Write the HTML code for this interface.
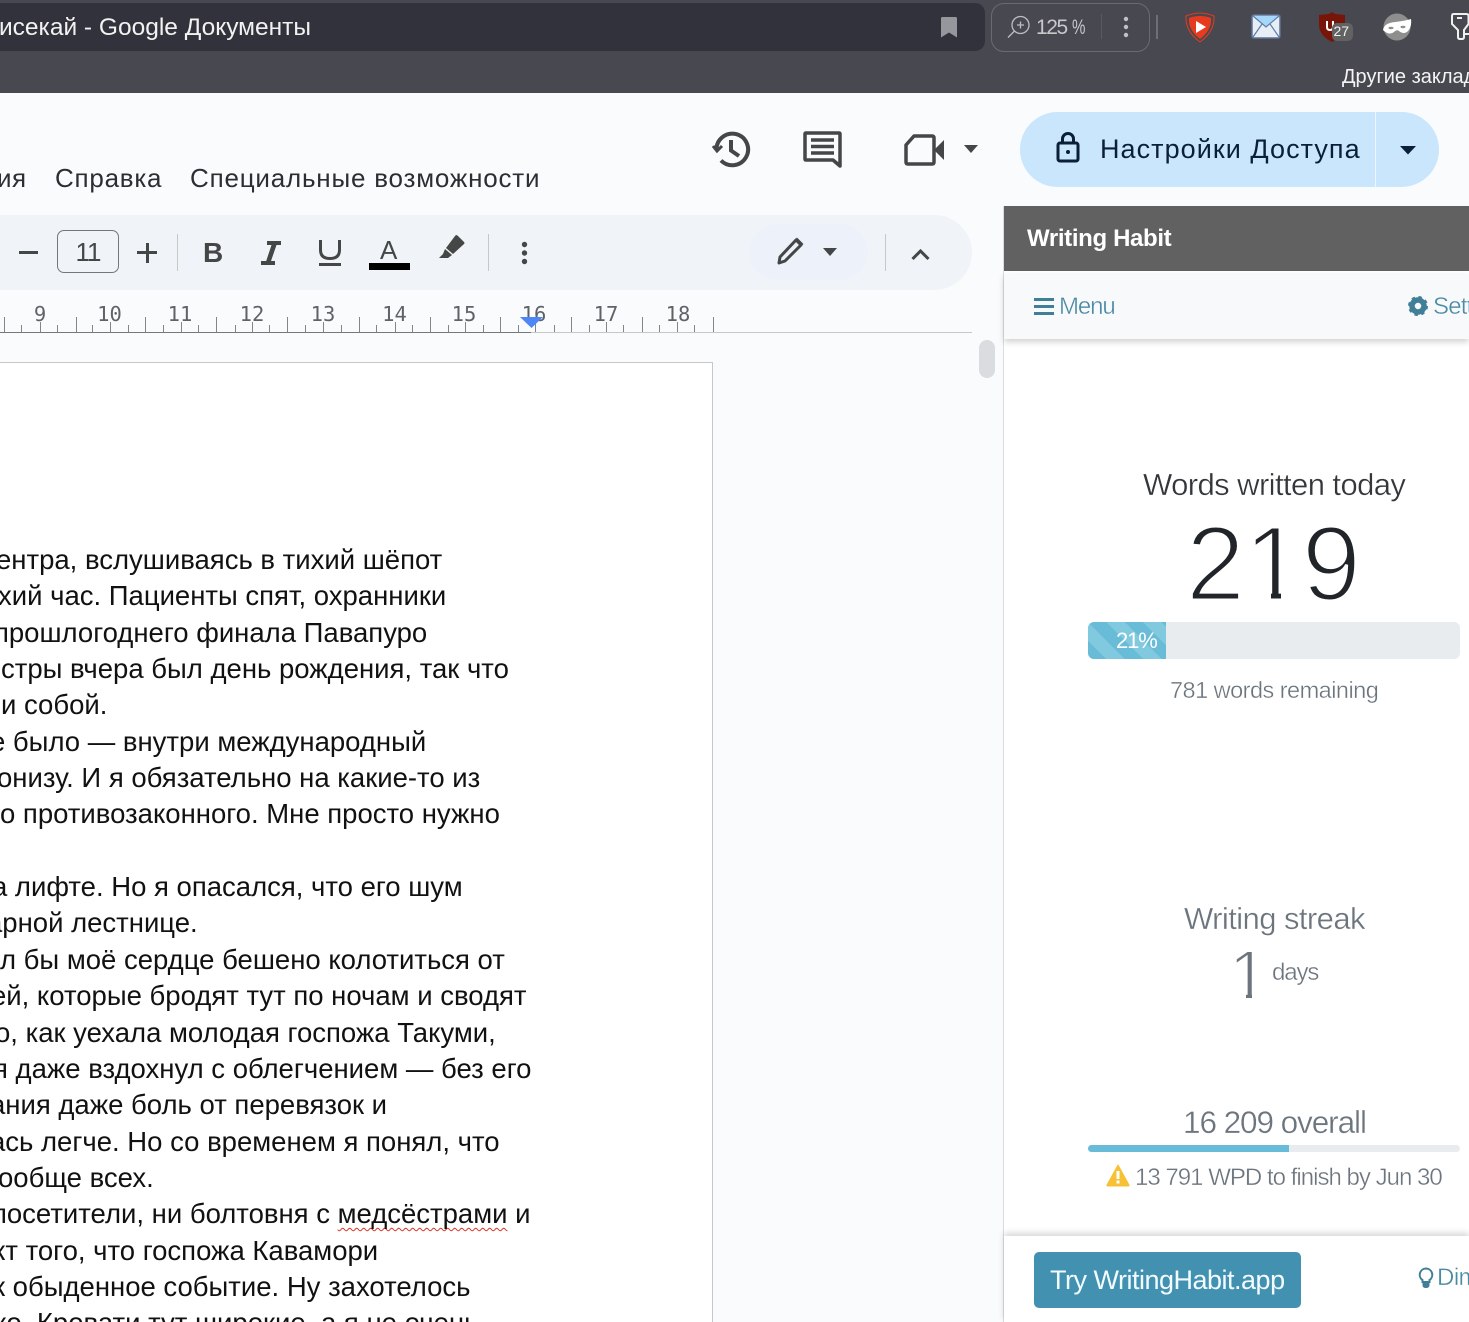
<!DOCTYPE html>
<html lang="ru"><head><meta charset="utf-8"><title>Google Документы</title>
<style>
html,body{margin:0;padding:0;width:1469px;height:1322px;overflow:hidden;background:#f9fbfd;font-family:"Liberation Sans",sans-serif}
body{position:relative}
#w{position:absolute;left:0;top:0;width:1469px;height:1322px;overflow:hidden}
.a{position:absolute;white-space:nowrap}
.l{position:absolute;white-space:nowrap;font-size:27.500px;line-height:36px;color:#111}
.lt{-webkit-text-stroke:.35px #fff}
svg{position:absolute;overflow:visible}
</style></head><body><div id="w">
<div class="a" style="left:0;top:0;width:1469px;height:93px;background:#484850"></div>
<div class="a" style="left:0;top:3px;width:985px;height:48px;background:#31323b;border-radius:0 10px 10px 0"></div>
<div class="a" style="left:-1px;top:13px;font-size:24.500px;line-height:30px;color:#f2f2f2">исекай - Google Документы</div>
<svg style="left:941px;top:17px" width="16" height="21"><path d="M0 1.500Q0 0 1.500 0H14.500Q16 0 16 1.500V20.500L8 15.500L0 20.500Z" fill="#96979c"/></svg>
<div class="a" style="left:991px;top:3px;width:157px;height:47px;border:1px solid #6a6b72;border-radius:13px"></div>
<svg style="left:1007px;top:14px" width="26" height="26" fill="none" stroke="#bdbdc1" stroke-width="1.300"><circle cx="13.500" cy="11" r="8.500"/><path d="M7.500 17L1 23.500M13.500 7.500V14.500M10 11H17"/></svg>
<div class="a" style="left:1036px;top:14px;font-size:21px;line-height:28px;color:#c8c8cb;letter-spacing:-1.400px">125</div>
<div class="a" style="left:1072px;top:14px;font-size:21px;line-height:28px;color:#c8c8cb;transform:scaleX(.72);transform-origin:0 0">%</div>
<div class="a" style="left:1101px;top:14px;width:1px;height:25px;background:#5a5b62"></div>
<svg style="left:1122px;top:16px" width="8" height="22" fill="#c2c2c5"><circle cx="4" cy="3" r="2.200"/><circle cx="4" cy="11" r="2.200"/><circle cx="4" cy="19" r="2.200"/></svg>
<div class="a" style="left:1156px;top:15px;width:2px;height:24px;background:#6e6f76"></div>
<svg style="left:1184px;top:11px" width="32" height="32"><path d="M16 2Q22 2 30 5Q31 20 16 31Q1 20 2 5Q10 2 16 2Z" fill="none" stroke="#e63b1f" stroke-width="1"/><path d="M16 5Q22 5 27 7Q28 19 16 28Q4 19 5 7Q10 5 16 5Z" fill="#e63b1f"/><path d="M12 10L22 16L12 22Z" fill="#fff"/></svg>
<svg style="left:1251px;top:14px" width="30" height="25"><rect x="1" y="1" width="28" height="23" rx="2" fill="#e8eef6" stroke="#5d7396" stroke-width="1.500"/><path d="M2 2H28L15 13Z" fill="#a6d8fb"/><path d="M2 2L15 13L28 2M2 23L11 10M28 23L19 10" fill="none" stroke="#5d7fa8" stroke-width="1.200"/></svg>
<svg style="left:1318px;top:12px" width="36" height="31"><path d="M14 0L17 2L27 3V14Q26 24 14 30Q2 24 1 14V3L11 2Z" fill="#761508"/><path d="M9 9V15Q9 18 12 18Q15 18 15 15V9" fill="none" stroke="#fff" stroke-width="2"/><rect x="14" y="11" width="21" height="18" rx="5" fill="#626262"/></svg>
<div class="a" style="left:1333.500px;top:23px;font-size:14px;line-height:16px;color:#f2f2f2">27</div>
<svg style="left:1382px;top:13px" width="30" height="28"><circle cx="15" cy="14" r="13.500" fill="#8e8e8e"/><path d="M1 17Q2 10 13 9Q22 8 29 6Q30 14 26 18Q22 22 17 18Q15 16 12 19Q7 23 1 17Z" fill="#fff"/><ellipse cx="9" cy="15" rx="2.500" ry="1.200" fill="#8e8e8e"/><ellipse cx="21" cy="14" rx="2.500" ry="1.200" fill="#8e8e8e"/></svg>
<svg style="left:1450px;top:13px" width="30" height="28" fill="none" stroke="#f0f0f0" stroke-width="2"><path d="M3.500 1H16.500Q18.500 1 18.500 3V11L14 17V24Q14 26 12 26H10Q8 26 8 24V17L2 11V3Q2 1 3.500 1Z"/><path d="M7 5H12M14 21H30"/></svg>
<div class="a" style="left:1342px;top:64px;font-size:20px;line-height:26px;color:#f4f4f4">Другие заклад</div>

<div class="a" style="left:-3px;top:162px;font-size:26px;line-height:32px;color:#2b2f33;letter-spacing:.45px">ия</div>
<div class="a" style="left:55px;top:162px;font-size:26px;line-height:32px;color:#2b2f33;letter-spacing:.75px">Справка</div>
<div class="a" style="left:190px;top:162px;font-size:26px;line-height:32px;color:#2b2f33;letter-spacing:.8px">Специальные возможности</div>

<svg style="left:712px;top:129px" width="40" height="42" fill="none" stroke="#444746" stroke-width="4"><path d="M4.500 21A15.800 15.800 0 1 1 9 31.500"/><path d="M1 17L5 22L10 17" stroke-width="3"/><path d="M19 11V21.500L27 27"/></svg>
<svg style="left:803px;top:131px" width="40" height="38" fill="none"><path d="M3 2H36Q37 2 37 3V35L30 29H3Q2 29 2 28V3Q2 2 3 2Z" stroke="#444746" stroke-width="3.500" stroke-linejoin="round"/><path d="M8 9H31M8 15.500H31M8 22H31" stroke="#444746" stroke-width="3.500"/></svg>
<svg style="left:903px;top:134px" width="42" height="32" fill="none"><path d="M11 2H29Q31 2 31 4V28Q31 30 29 30H5Q3 30 3 28V11Z" stroke="#444746" stroke-width="3.500" stroke-linejoin="round"/><path d="M31 16L41 6V26Z" fill="#444746"/></svg>
<svg style="left:964px;top:145px" width="15" height="9"><path d="M0 0H14L7 8Z" fill="#444746"/></svg>
<div class="a" style="left:1020px;top:112px;width:419px;height:75px;background:#c9e6fd;border-radius:37.500px"></div>
<div class="a" style="left:1375px;top:112px;width:1px;height:75px;background:#eef7fe"></div>
<svg style="left:1055px;top:132px" width="26" height="31" fill="none" stroke="#0a1f38" stroke-width="3"><rect x="3" y="11" width="20" height="18" rx="2"/><path d="M7.500 11V7A5.500 5.500 0 0 1 18.500 7V11"/><circle cx="13" cy="20" r="2" fill="#0a1f38" stroke="none"/></svg>
<div class="a" style="left:1100px;top:132px;font-size:27px;line-height:34px;color:#0a1f38;letter-spacing:1.050px">Настройки Доступа</div>
<svg style="left:1400px;top:146px" width="16" height="9"><path d="M0 0H16L8 8.500Z" fill="#0a1f38"/></svg>

<div class="a" style="left:-40px;top:215px;width:1012px;height:75px;background:#f0f4f9;border-radius:37.500px"></div>
<div class="a" style="left:749px;top:224px;width:119px;height:56px;background:#edf2fa;border-radius:28px"></div>
<div class="a" style="left:19px;top:251px;width:19px;height:3px;background:#444746"></div>
<div class="a" style="left:57px;top:230px;width:60px;height:41px;border:1.300px solid #747775;border-radius:7px;text-align:center;font-size:26px;line-height:43px;color:#444746;letter-spacing:-1px">11</div>
<div class="a" style="left:137px;top:251px;width:20px;height:3px;background:#444746"></div>
<div class="a" style="left:145.500px;top:242.500px;width:3px;height:20px;background:#444746"></div>
<div class="a" style="left:177px;top:234px;width:1px;height:37px;background:#c7c7c7"></div>
<div class="a" style="left:203px;top:237px;font-size:28px;line-height:32px;font-weight:bold;color:#444746">B</div>
<svg style="left:261px;top:241px" width="20" height="25" fill="#444746"><path d="M6 0H20V4H15.500L10 20H14V24H0V20H5.200L10.500 4H6Z"/></svg>
<svg style="left:319px;top:240px" width="22" height="27" fill="none" stroke="#444746" stroke-width="3"><path d="M1.500 0V10Q1.500 18.500 11 18.500Q20.500 18.500 20.500 10V0"/><path d="M0 24.500H22"/></svg>
<div class="a" style="left:380px;top:235px;font-size:26px;line-height:30px;color:#444746">A</div>
<div class="a" style="left:369px;top:263px;width:41px;height:7px;background:#000"></div>
<svg style="left:438px;top:235px" width="28" height="25"><path d="M18 0Q19 0 20 1L26 7Q27 8 26 9L15 19L8 13L17 1Q17.500 .5 18 0Z" fill="#444746"/><path d="M7 14L14 20L10 23H1L5 19Z" fill="#444746"/></svg>
<div class="a" style="left:488px;top:234px;width:1px;height:37px;background:#c7c7c7"></div>
<svg style="left:520px;top:241px" width="9" height="25" fill="#444746"><circle cx="4.500" cy="3.500" r="2.700"/><circle cx="4.500" cy="12" r="2.700"/><circle cx="4.500" cy="20.500" r="2.700"/></svg>
<svg style="left:777px;top:236px" width="28" height="29" fill="none"><path d="M3 21L19 4L24 9L8 25L2 27Z" stroke="#444746" stroke-width="3" stroke-linejoin="round"/><path d="M20 1.500L26.500 8L24 10.500L18 4Z" fill="#444746"/></svg>
<svg style="left:823px;top:248px" width="14" height="8"><path d="M0 0H14L7 8Z" fill="#444746"/></svg>
<div class="a" style="left:885px;top:234px;width:1px;height:37px;background:#c7c7c7"></div>
<svg style="left:911px;top:248px" width="19" height="13" fill="none" stroke="#444746" stroke-width="3"><path d="M1.500 11L9.500 3L17.500 11"/></svg>

<svg style="left:0;top:300px" width="980" height="40" font-family="'DejaVu Sans Mono',monospace" font-size="20.500" fill="#5f6368" text-anchor="middle">
<text x="40" y="21">9</text><text x="109.500" y="21">10</text><text x="180" y="21">11</text><text x="252" y="21">12</text><text x="323" y="21">13</text><text x="394.500" y="21">14</text><text x="464" y="21">15</text><text x="534" y="21">16</text><text x="606" y="21">17</text><text x="678" y="21">18</text>
<path stroke="#80868b" stroke-width="1" fill="none" d="M4.500 17V32M76.500 17V32M145.500 17V32M216.500 17V32M287.500 17V32M359.500 17V32M430.500 17V32M500.500 17V32M571.500 17V32M642.500 17V32M713.500 17V32M21.500 25V32M40.500 22V32M57.500 25V32M92.500 25V32M110.500 22V32M128.500 25V32M163.500 25V32M181.500 22V32M198.500 25V32M235.500 25V32M252.500 22V32M269.500 25V32M305.500 25V32M323.500 22V32M341.500 25V32M376.500 25V32M395.500 22V32M412.500 25V32M448.500 25V32M465.500 22V32M483.500 25V32M518.500 25V32M535.500 22V32M554.500 25V32M589.500 25V32M606.500 22V32M623.500 25V32M659.500 25V32M677.500 22V32M694.500 25V32"/>
<path d="M0 32.500H531" stroke="#777" stroke-width="1"/><path d="M531 32.500H972" stroke="#c7c7c7" stroke-width="1"/>
<path d="M520 17H543L531.500 28Z" fill="#4f86f7"/></svg>

<div class="a" style="left:979px;top:340px;width:16px;height:38px;background:#dadce0;border-radius:8px"></div>
<div class="a" style="left:-2px;top:362px;width:715px;height:970px;background:#fff;border:1px solid #c7c7c7;box-sizing:border-box"></div>

<div class="l" style="left:-4px;top:542px">ентра, вслушиваясь в тихий шёпот</div>
<div class="l" style="left:-2px;top:578px">хий час. Пациенты спят, охранники</div>
<div class="l" style="left:-6px;top:615px">прошлогоднего финала Павапуро</div>
<div class="l" style="left:1px;top:651px">стры вчера был день рождения, так что</div>
<div class="l" style="left:1px;top:687px">и собой.</div>
<div class="l" style="left:-10px;top:724px">е было — внутри международный</div>
<div class="l" style="left:-3px;top:760px">онизу. И я обязательно на какие-то из</div>
<div class="l" style="left:0;top:796px">о противозаконного. Мне просто нужно</div>
<div class="l" style="left:-8px;top:869px">а лифте. Но я опасался, что его шум</div>
<div class="l" style="left:-13px;top:905px">арной лестнице.</div>
<div class="l" style="left:0;top:942px">л бы моё сердце бешено колотиться от</div>
<div class="l" style="left:-9px;top:978px">ей, которые бродят тут по ночам и сводят</div>
<div class="l" style="left:-5px;top:1015px">о, как уехала молодая госпожа Такуми,</div>
<div class="l" style="left:-7px;top:1051px">я даже вздохнул с облегчением — без его</div>
<div class="l" style="left:-10px;top:1087px">ания даже боль от перевязок и</div>
<div class="l" style="left:-10px;top:1124px">ась легче. Но со временем я понял, что</div>
<div class="l" style="left:-2px;top:1160px">ообще всех.</div>
<div class="l" style="left:-8px;top:1196px">посетители, ни болтовня с <span style="text-decoration:underline wavy #d93025 1.200px;text-underline-offset:4px;text-decoration-skip-ink:none">медсёстрами</span> и</div>
<div class="l" style="left:-7px;top:1233px">кт того, что госпожа Кавамори</div>
<div class="l" style="left:-7px;top:1269px">к обыденное событие. Ну захотелось</div>
<div class="l" style="left:-6px;top:1305px">ко. Кровати тут широкие, а я не очень</div>

<div class="a" style="left:1003px;top:206px;width:466px;height:1116px;background:#fff;border-left:1px solid #dadce0"></div>
<div class="a" style="left:1004px;top:206px;width:465px;height:65px;background:#616161"></div>
<div class="a" style="left:1027px;top:224px;font-size:24px;line-height:30px;font-weight:bold;color:#fff;letter-spacing:-.35px">Writing Habit</div>
<div class="a" style="left:1004px;top:274px;width:465px;height:65px;background:#f8f9fb;box-shadow:0 3px 6px rgba(0,0,0,.18)"></div>
<div class="a" style="left:1034px;top:297.500px;width:20px;height:3.500px;background:#417f98"></div>
<div class="a" style="left:1034px;top:304.500px;width:20px;height:3.500px;background:#417f98"></div>
<div class="a" style="left:1034px;top:311.500px;width:20px;height:3.500px;background:#417f98"></div>
<div class="a lt" style="left:1059px;top:292px;font-size:24px;line-height:30px;color:#4a8aa3;letter-spacing:-1.100px">Menu</div>
<svg style="left:1408px;top:296px" width="20" height="20"><circle cx="10" cy="10" r="6" fill="none" stroke="#417f98" stroke-width="5.500"/><circle cx="10" cy="10" r="8.500" fill="none" stroke="#417f98" stroke-width="3" stroke-dasharray="3.300 3.400"/></svg>
<div class="a lt" style="left:1433px;top:292px;font-size:24px;line-height:30px;color:#4a8aa3;letter-spacing:-.8px">Sett</div>

<div class="a lt" style="left:1143px;top:466px;font-size:31px;line-height:38px;color:#33373b;letter-spacing:-.58px">Words written today</div>
<div class="a" style="left:1186px;top:502px;font-size:106px;line-height:124px;color:#212529;-webkit-text-stroke:3px #fff;letter-spacing:-1px">219</div>
<div class="a" style="left:1248px;top:589px;width:23px;height:15px;background:#fff"></div>
<div class="a" style="left:1281px;top:589px;width:20px;height:15px;background:#fff"></div>
<div class="a" style="left:1088px;top:622px;width:372px;height:37px;background:#e9ecef;border-radius:6px"></div>
<div class="a" style="left:1088px;top:622px;width:78px;height:37px;border-radius:6px 0 0 6px;background:repeating-linear-gradient(45deg,#69bcd7 0 13px,#81c9df 13px 26px)"></div>
<div class="a" style="left:1116px;top:626px;font-size:22px;line-height:29px;color:#fff;letter-spacing:-1.100px">21%</div>
<div class="a lt" style="left:1170px;top:676px;font-size:23.500px;line-height:29px;color:#6c757d;letter-spacing:-.52px">781 words remaining</div>

<div class="a lt" style="left:1184px;top:900px;font-size:31px;line-height:38px;color:#6c757d;letter-spacing:-.57px">Writing streak</div>
<div class="a" style="left:1229px;top:938px;font-size:70px;line-height:74px;color:#6c757d;-webkit-text-stroke:2px #fff">1</div>
<div class="a" style="left:1232px;top:991px;width:14px;height:10px;background:#fff"></div>
<div class="a" style="left:1252px;top:991px;width:14px;height:10px;background:#fff"></div>
<div class="a lt" style="left:1272px;top:958px;font-size:24px;line-height:30px;color:#6c757d;letter-spacing:-1.100px">days</div>

<div class="a lt" style="left:1183px;top:1103px;font-size:31.500px;line-height:38px;color:#6c757d;letter-spacing:-1.070px">16 209 overall</div>
<div class="a" style="left:1088px;top:1145px;width:372px;height:7px;background:#e9ecef;border-radius:4px"></div>
<div class="a" style="left:1088px;top:1145px;width:201px;height:7px;background:#69bcd7;border-radius:4px 0 0 4px"></div>
<svg style="left:1106px;top:1164px" width="24" height="23"><path d="M12 1L23 21Q23.500 22 22 22H2Q.5 22 1 21Z" fill="#f7c135" stroke="#f7c135" stroke-linejoin="round"/><rect x="10.500" y="7" width="3" height="8" fill="#fff"/><rect x="10.500" y="16.500" width="3" height="3" fill="#fff"/></svg>
<div class="a lt" style="left:1135px;top:1163px;font-size:24px;line-height:29px;color:#6c757d;letter-spacing:-.98px">13 791 WPD to finish by Jun 30</div>

<div class="a" style="left:1004px;top:1236px;width:465px;height:86px;background:#fff;box-shadow:0 -3px 6px rgba(0,0,0,.16)"></div>
<div class="a" style="left:1034px;top:1252px;width:267px;height:56px;background:#4391b0;border-radius:5px"></div>
<div class="a" style="left:1050px;top:1264px;font-size:27px;line-height:33px;color:#f2fbff;letter-spacing:-.5px">Try WritingHabit.app</div>
<svg style="left:1418px;top:1267px" width="16" height="22"><path d="M8 1.500A6.300 6.300 0 0 0 4.500 13V15H11.500V13A6.300 6.300 0 0 0 8 1.500Z" fill="none" stroke="#417f98" stroke-width="2"/><path d="M4.500 15H11.500V18Q11.500 21 8 21Q4.500 21 4.500 18Z" fill="#417f98"/></svg>
<div class="a lt" style="left:1437px;top:1263px;font-size:24px;line-height:30px;color:#4a8aa3;letter-spacing:-.5px">Dim</div>
</div></body></html>
